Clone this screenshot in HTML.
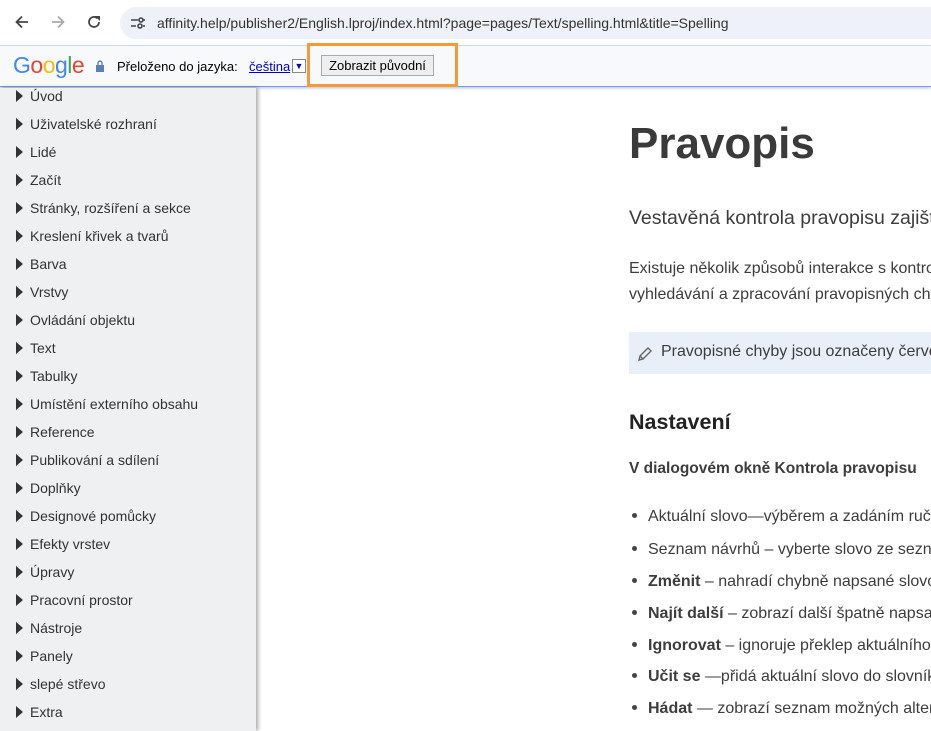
<!DOCTYPE html>
<html><head><meta charset="utf-8"><style>
*{margin:0;padding:0;box-sizing:border-box}
body{width:931px;height:731px;overflow:hidden;background:#fff;font-family:"Liberation Sans",Arial,sans-serif;position:relative}
.a{position:absolute;white-space:nowrap}
#top{position:absolute;left:0;top:0;width:931px;height:46px;background:#fff;border-bottom:1px solid #e0e0e0}
#url{position:absolute;left:120px;top:7px;width:830px;height:32px;border-radius:16px;background:#eef1f8}
#gbar{position:absolute;left:0;top:46px;width:931px;height:41px;background:#f8f9fb;border-bottom:1px solid #7a9fd4;box-shadow:0 1px 3px rgba(60,100,170,.4)}
#side{position:absolute;left:0;top:88px;width:256px;height:643px;background:#eef0f2;box-shadow:2px 0 4px rgba(0,0,0,.35)}
.it{position:absolute;left:16px;font-size:14px;color:#333}
.it:before{content:"";display:inline-block;border-left:7px solid #333;border-top:6px solid transparent;border-bottom:6px solid transparent;margin-right:7px;vertical-align:-1px}
#main{position:absolute;left:629px;top:0;width:302px;height:731px;overflow:hidden;color:#3d3d3d}
#main .a{left:0}
.li{font-size:16px;color:#3d3d3d;padding-left:3px}
.li:before{content:"";display:inline-block;width:5px;height:5px;border-radius:50%;background:#444;margin-right:11px;vertical-align:3px}
</style></head><body>
<div id="top">
 <svg class="a" style="left:13px;top:13px" width="18" height="18" viewBox="0 0 18 18"><path d="M15 9H4M9 3.5L3.5 9 9 14.5" stroke="#444" stroke-width="1.8" fill="none"/></svg>
 <svg class="a" style="left:49px;top:13px" width="18" height="18" viewBox="0 0 18 18"><path d="M3 9h11M9 3.5L14.5 9 9 14.5" stroke="#aaa" stroke-width="1.8" fill="none"/></svg>
 <svg class="a" style="left:85px;top:13px" width="18" height="18" viewBox="0 0 18 18"><path d="M14 9a5 5 0 1 1-1.6-3.7" stroke="#444" stroke-width="1.8" fill="none"/><path d="M10 3h5v5z" fill="#444"/></svg>
 <div id="url"></div>
 <svg class="a" style="left:129px;top:14px" width="18" height="18" viewBox="0 0 18 18"><path d="M2 6h7M2 12h5" stroke="#444" stroke-width="1.6"/><circle cx="12" cy="6" r="2" fill="none" stroke="#444" stroke-width="1.6"/><circle cx="11" cy="12" r="2" fill="none" stroke="#444" stroke-width="1.6"/><path d="M14 6h2M14 12h2" stroke="#444" stroke-width="1.6"/></svg>
 <div class="a" style="left:157px;top:15px;font-size:14px;color:#333">affinity.help/publisher2/English.lproj/index.html?page=pages/Text/spelling.html&amp;title=Spelling</div>
</div>
<div id="gbar">
 <div class="a" style="left:13px;top:6px;font-size:23px;letter-spacing:-0.5px"><span style="color:#4285f4">G</span><span style="color:#ea4335">o</span><span style="color:#fbbc05">o</span><span style="color:#4285f4">g</span><span style="color:#34a853">l</span><span style="color:#ea4335">e</span></div>
 <svg class="a" style="left:95px;top:14px" width="10" height="12" viewBox="0 0 10 12"><rect x="1" y="5" width="8" height="7" fill="#5f7dbb"/><path d="M3 5V3a2 2 0 0 1 4 0v2" stroke="#5f7dbb" stroke-width="1.4" fill="none"/></svg>
 <div class="a" style="left:117px;top:13px;font-size:13px;color:#000">Přeloženo do jazyka:</div>
 <div class="a" style="left:249px;top:13px;font-size:13px;color:#00c;text-decoration:underline">čeština</div>
 <div class="a" style="left:292px;top:13px;width:14px;height:14px;border:1px solid #888;background:#fff;color:#00c;font-size:9px;text-align:center;line-height:13px">▼</div>
 <div class="a" style="left:307px;top:-3px;width:151px;height:44px;border:3px solid #f59a3a"></div>
 <div class="a" style="left:321px;top:9px;width:113px;height:21px;border:1px solid #aaa;background:#eee;font-size:13px;text-align:center;line-height:19px;color:#000">Zobrazit původní</div>
</div>
<div id="side">
 <div class="it" style="top:0px">Úvod</div>
 <div class="it" style="top:28px">Uživatelské rozhraní</div>
 <div class="it" style="top:56px">Lidé</div>
 <div class="it" style="top:84px">Začít</div>
 <div class="it" style="top:112px">Stránky, rozšíření a sekce</div>
 <div class="it" style="top:140px">Kreslení křivek a tvarů</div>
 <div class="it" style="top:168px">Barva</div>
 <div class="it" style="top:196px">Vrstvy</div>
 <div class="it" style="top:224px">Ovládání objektu</div>
 <div class="it" style="top:252px">Text</div>
 <div class="it" style="top:280px">Tabulky</div>
 <div class="it" style="top:308px">Umístění externího obsahu</div>
 <div class="it" style="top:336px">Reference</div>
 <div class="it" style="top:364px">Publikování a sdílení</div>
 <div class="it" style="top:392px">Doplňky</div>
 <div class="it" style="top:420px">Designové pomůcky</div>
 <div class="it" style="top:448px">Efekty vrstev</div>
 <div class="it" style="top:476px">Úpravy</div>
 <div class="it" style="top:504px">Pracovní prostor</div>
 <div class="it" style="top:532px">Nástroje</div>
 <div class="it" style="top:560px">Panely</div>
 <div class="it" style="top:588px">slepé střevo</div>
 <div class="it" style="top:616px">Extra</div>
</div>
<div id="main">
 <div class="a" style="top:119px;font-size:44px;font-weight:bold;color:#3a3a3a">Pravopis</div>
 <div class="a" style="top:207px;font-size:19.5px">Vestavěná kontrola pravopisu zajišťuje</div>
 <div class="a" style="top:260px;font-size:16px">Existuje několik způsobů interakce s kontrolou</div>
 <div class="a" style="top:286px;font-size:16px">vyhledávání a zpracování pravopisných chyb</div>
 <div class="a" style="top:332px;width:302px;height:42px;background:#e8eff8"></div>
 <svg class="a" style="left:8px;top:346px" width="16" height="16" viewBox="0 0 16 16"><path d="M2 14l1-4 8-8 3 3-8 8z M3 10l3 3" stroke="#666" stroke-width="1.4" fill="none"/></svg>
 <div class="a" style="left:32px!important;top:343px;font-size:16px">Pravopisné chyby jsou označeny červeně</div>
 <div class="a" style="top:410px;font-size:21.5px;font-weight:bold;color:#222">Nastavení</div>
 <div class="a" style="top:460px;font-size:15.5px;font-weight:bold">V dialogovém okně Kontrola pravopisu</div>
 <div class="a li" style="top:508px">Aktuální slovo—výběrem a zadáním ručně</div>
 <div class="a li" style="top:541px">Seznam návrhů – vyberte slovo ze seznamu</div>
 <div class="a li" style="top:573px"><b>Změnit</b> – nahradí chybně napsané slovo</div>
 <div class="a li" style="top:605px"><b>Najít další</b> – zobrazí další špatně napsané</div>
 <div class="a li" style="top:637px"><b>Ignorovat</b> – ignoruje překlep aktuálního</div>
 <div class="a li" style="top:668px"><b>Učit se</b> —přidá aktuální slovo do slovníku</div>
 <div class="a li" style="top:700px"><b>Hádat</b> — zobrazí seznam možných alternativ</div>
</div>
</body></html>
